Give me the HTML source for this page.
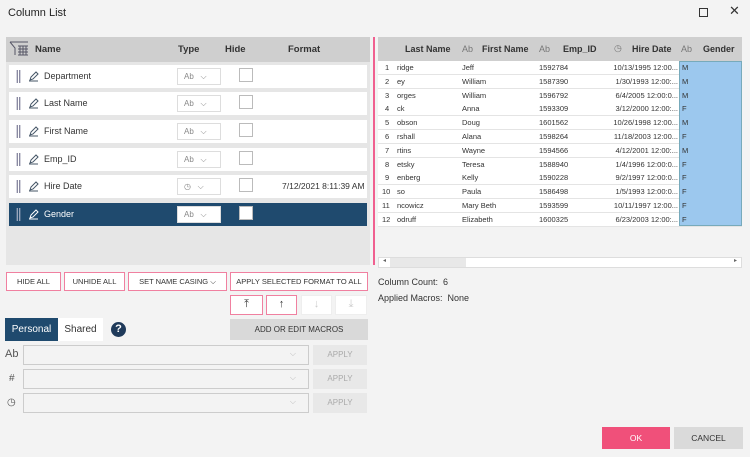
<!DOCTYPE html><html><head><style>
*{box-sizing:border-box;margin:0;padding:0}
body{width:750px;height:457px;background:#f3f3f3;font-family:"Liberation Sans",sans-serif;position:relative;overflow:hidden;color:#333}
.a{position:absolute}
.row{position:absolute;left:9px;width:358px;height:23px;background:#fff;font-size:9px}
.row .n{position:absolute;left:35px;top:6px}
.row .t{position:absolute;left:168px;top:3px;width:44px;height:17px;border:1px solid #ddd;background:#fff;font-size:8px;color:#888;padding:3px 0 0 6px}
.row .h{position:absolute;left:230px;top:3px;width:14px;height:14px;border:1px solid #bbb;background:#fff}
.dr{position:absolute;left:7px;top:5px;width:5px;height:13px;background:radial-gradient(circle,#557 0.7px,transparent 0.9px) 0 0/2.5px 2px}
.pen{position:absolute;left:19px;top:6px}
.btn{position:absolute;height:19px;border:1px solid #f080a0;background:#fff;font-size:7.5px;text-align:center;line-height:17px;color:#333}
.g{position:absolute;left:378px;width:364px;height:14px;font-size:7.5px;border-bottom:1px solid #e4e4e4;background:#fff}
.g span{position:absolute;top:2px}
.dd{position:absolute;left:23px;width:286px;height:20px;border:1px solid #ccc;background:#f3f3f3}
.ap{position:absolute;left:313px;width:54px;height:20px;background:#e8e8e8;color:#aaa;font-size:8px;text-align:center;line-height:20px}
</style></head><body>
<div class="a" style="left:8px;top:7px;font-size:11px;color:#222">Column List</div>
<div class="a" style="left:699px;top:8px;width:9px;height:9px;border:1.3px solid #333"></div>
<div class="a" style="left:729px;top:3px;font-size:13px;color:#333">✕</div>

<div class="a" style="left:6px;top:37px;width:364px;height:228px;background:#e6e6e6"></div>
<div class="a" style="left:6px;top:37px;width:364px;height:25px;background:#cfcfcf;font-size:9.5px;font-weight:bold;color:#333">
<svg class="a" style="left:3px;top:4px" width="20" height="16" viewBox="0 0 20 16"><path d="M1 1h18M1 1l5 6v7M9 5h10M9 8h10M9 11h10M9 14h10M11 5v9M14 5v9M17 5v9" stroke="#556" stroke-width="1" fill="none"/></svg>
<span class="a" style="left:29px;top:7px">Name</span><span class="a" style="left:172px;top:7px">Type</span><span class="a" style="left:219px;top:7px">Hide</span><span class="a" style="left:282px;top:7px">Format</span></div>

<div class="row" style="top:65px"><i class="dr"></i><svg class="pen" width="11" height="11"><path d="M1 10h9M2 9l1-3 5-5 2 2-5 5z" stroke="#456" fill="none"/></svg><span class="n">Department</span><span class="t">Ab &nbsp; ⌵</span><span class="h"></span></div>
<div class="row" style="top:92px"><i class="dr"></i><svg class="pen" width="11" height="11"><path d="M1 10h9M2 9l1-3 5-5 2 2-5 5z" stroke="#456" fill="none"/></svg><span class="n">Last Name</span><span class="t">Ab &nbsp; ⌵</span><span class="h"></span></div>
<div class="row" style="top:120px"><i class="dr"></i><svg class="pen" width="11" height="11"><path d="M1 10h9M2 9l1-3 5-5 2 2-5 5z" stroke="#456" fill="none"/></svg><span class="n">First Name</span><span class="t">Ab &nbsp; ⌵</span><span class="h"></span></div>
<div class="row" style="top:148px"><i class="dr"></i><svg class="pen" width="11" height="11"><path d="M1 10h9M2 9l1-3 5-5 2 2-5 5z" stroke="#456" fill="none"/></svg><span class="n">Emp_ID</span><span class="t">Ab &nbsp; ⌵</span><span class="h"></span></div>
<div class="row" style="top:175px"><i class="dr"></i><svg class="pen" width="11" height="11"><path d="M1 10h9M2 9l1-3 5-5 2 2-5 5z" stroke="#456" fill="none"/></svg><span class="n">Hire Date</span><span class="t">◷ &nbsp; ⌵</span><span class="h"></span><span class="a" style="left:273px;top:6px;font-size:8.5px">7/12/2021 8:11:39 AM</span></div>
<div class="row" style="top:203px;background:#1f4a6e;color:#fff"><i class="dr" style="background:radial-gradient(circle,#ccd 0.7px,transparent 0.9px) 0 0/2.5px 2px"></i><svg class="pen" width="11" height="11"><path d="M1 10h9M2 9l1-3 5-5 2 2-5 5z" stroke="#fff" fill="none"/></svg><span class="n">Gender</span><span class="t">Ab &nbsp; ⌵</span><span class="h"></span></div>

<div class="a" style="left:373px;top:37px;width:2px;height:228px;background:#f06090"></div>

<div class="a" style="left:378px;top:37px;width:364px;height:24px;background:#cfcfcf;font-size:9px;font-weight:bold;color:#333">
<span class="a" style="left:27px;top:7px">Last Name</span><span class="a" style="left:84px;top:7px;font-weight:normal;color:#777">Ab</span><span class="a" style="left:104px;top:7px">First Name</span><span class="a" style="left:161px;top:7px;font-weight:normal;color:#777">Ab</span><span class="a" style="left:185px;top:7px">Emp_ID</span><span class="a" style="left:236px;top:6px;font-weight:normal;color:#777">◷</span><span class="a" style="left:254px;top:7px">Hire Date</span><span class="a" style="left:303px;top:7px;font-weight:normal;color:#777">Ab</span><span class="a" style="left:325px;top:7px">Gender</span></div>
<div class="a" style="left:679px;top:61px;width:63px;height:165px;background:#9cc8ee;z-index:2;border:1px solid #7ab"></div>
<div id="g"></div>
<script>
var d=[["ridge","Jeff","1592784","10/13/1995 12:00...","M"],["ey","William","1587390","1/30/1993 12:00:...","M"],["orges","William","1596792","6/4/2005 12:00:0...","M"],["ck","Anna","1593309","3/12/2000 12:00:...","F"],["obson","Doug","1601562","10/26/1998 12:00...","M"],["rshall","Alana","1598264","11/18/2003 12:00...","F"],["rtins","Wayne","1594566","4/12/2001 12:00:...","M"],["etsky","Teresa","1588940","1/4/1996 12:00:0...","F"],["enberg","Kelly","1590228","9/2/1997 12:00:0...","F"],["so","Paula","1586498","1/5/1993 12:00:0...","F"],["ncowicz","Mary Beth","1593599","10/11/1997 12:00...","F"],["odruff","Elizabeth","1600325","6/23/2003 12:00:...","F"]];
var h="";d.forEach(function(r,i){var t=61+i*13.8;h+='<div class="g" style="top:'+t+'px"><span style="left:'+(i<9?7:4)+'px">'+(i+1)+'</span><span style="left:19px">'+r[0]+'</span><span style="left:84px">'+r[1]+'</span><span style="left:161px">'+r[2]+'</span><span style="right:64px">'+r[3]+'</span><span style="left:304px;z-index:3">'+r[4]+'</span></div>';});
document.getElementById("g").innerHTML=h;
</script>
<div class="a" style="left:378px;top:257px;width:364px;height:11px;background:#fff;border:1px solid #ddd"></div>
<div class="a" style="left:390px;top:258px;width:76px;height:9px;background:#e8e8e8"></div>
<div class="a" style="left:383px;top:257px;font-size:6px;color:#666">◂</div>
<div class="a" style="left:734px;top:257px;font-size:6px;color:#666">▸</div>
<div class="a" style="left:378px;top:277px;font-size:9px">Column Count: &nbsp;6</div>
<div class="a" style="left:378px;top:293px;font-size:9px">Applied Macros: &nbsp;None</div>

<div class="btn" style="left:6px;top:272px;width:55px">HIDE ALL</div>
<div class="btn" style="left:64px;top:272px;width:61px">UNHIDE ALL</div>
<div class="btn" style="left:128px;top:272px;width:99px">SET NAME CASING ⌵</div>
<div class="btn" style="left:230px;top:272px;width:138px">APPLY SELECTED FORMAT TO ALL</div>
<div class="btn" style="left:230px;top:295px;width:33px;height:20px;font-size:11px">⤒</div>
<div class="btn" style="left:266px;top:295px;width:31px;height:20px;font-size:11px">↑</div>
<div class="btn" style="left:301px;top:295px;width:31px;height:20px;font-size:11px;border-color:#eee;color:#ccc">↓</div>
<div class="btn" style="left:335px;top:295px;width:32px;height:20px;font-size:11px;border-color:#eee;color:#ccc">⤓</div>
<div class="a" style="left:5px;top:318px;width:53px;height:23px;background:#1f4a6e;color:#fff;font-size:10px;text-align:center;line-height:23px">Personal</div>
<div class="a" style="left:58px;top:318px;width:45px;height:23px;background:#fff;font-size:10px;text-align:center;line-height:23px">Shared</div>
<div class="a" style="left:111px;top:322px;width:15px;height:15px;border-radius:50%;background:#1f3a5a;color:#fff;font-size:11px;font-weight:bold;text-align:center;line-height:15px">?</div>
<div class="a" style="left:230px;top:319px;width:138px;height:21px;background:#d9d9d9;font-size:8px;text-align:center;line-height:21px">ADD OR EDIT MACROS</div>
<div class="a" style="left:5px;top:348px;font-size:11px;color:#555">Ab</div>
<div class="a" style="left:9px;top:373px;font-size:10px;color:#555">#</div>
<div class="a" style="left:7px;top:397px;font-size:10px;color:#555">◷</div>
<div class="dd" style="top:345px"><span class="a" style="right:12px;top:3px;font-size:8px;color:#bbb">⌵</span></div>
<div class="dd" style="top:369px"><span class="a" style="right:12px;top:3px;font-size:8px;color:#bbb">⌵</span></div>
<div class="dd" style="top:393px"><span class="a" style="right:12px;top:3px;font-size:8px;color:#bbb">⌵</span></div>
<div class="ap" style="top:345px">APPLY</div>
<div class="ap" style="top:369px">APPLY</div>
<div class="ap" style="top:393px">APPLY</div>
<div class="a" style="left:602px;top:427px;width:68px;height:22px;background:#f0507a;color:#fff;font-size:8.5px;text-align:center;line-height:22px">OK</div>
<div class="a" style="left:674px;top:427px;width:69px;height:22px;background:#dadada;font-size:8.5px;text-align:center;line-height:22px">CANCEL</div>
</body></html>
